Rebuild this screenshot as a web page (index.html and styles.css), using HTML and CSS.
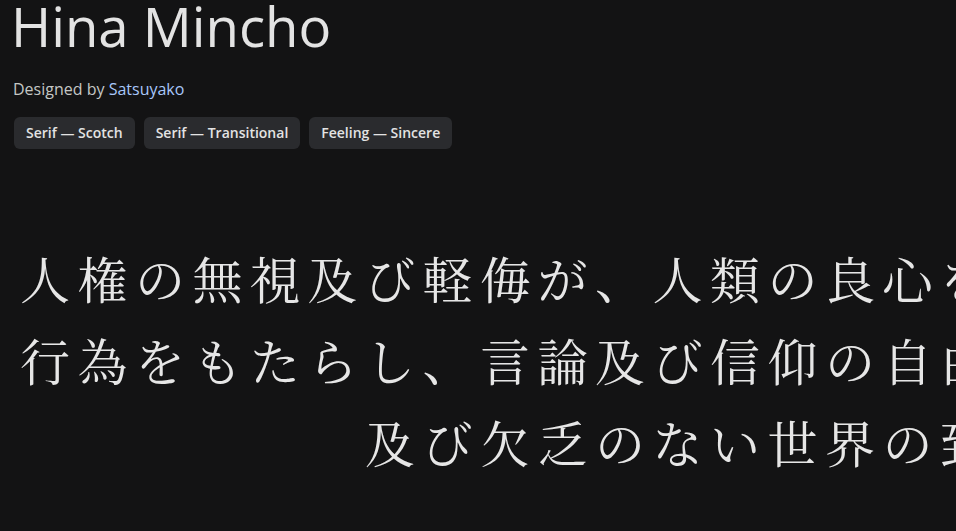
FILE: index.html
```html
<!DOCTYPE html>
<html lang="ja">
<head>
<meta charset="utf-8">
<title>Hina Mincho</title>
<link rel="stylesheet" href="styles.css">
</head>
<body>
<header class="header">
  <h1 class="title">Hina Mincho</h1>
  <p class="meta">Designed by <a class="designer" href="#">Satsuyako</a></p>
  <ul class="tags">
    <li class="tag">Serif — Scotch</li>
    <li class="tag">Serif — Transitional</li>
    <li class="tag">Feeling — Sincere</li>
  </ul>
</header>
<section class="sample" lang="ja">
  <div class="line">人権の無視及び軽侮が、人類の良心を踏みにじった野蛮</div>
  <div class="line">行為をもたらし、言論及び信仰の自由が受けられ、恐怖</div>
  <div class="line">及び欠乏のない世界の到来が</div>
</section>
</body>
</html>
```
FILE: styles.css
```css
html, body {
  margin: 0;
  padding: 0;
}
body {
  background: #131314;
  color: #e3e3e3;
  font-family: "Open Sans", "Liberation Sans", sans-serif;
  overflow: hidden;
  width: 956px;
  height: 531px;
}
.header {
  padding: 0 14px;
}
.title {
  margin: 0 0 0 -3px;
  font-size: 54.5px;
  line-height: 53px;
  font-weight: 400;
  color: #e3e3e3;
}
.meta {
  margin: 26px 0 0 -1px;
  font-size: 16px;
  line-height: 20px;
  color: #c4c7c5;
}
.designer {
  color: #a8c7fa;
  text-decoration: none;
}
.tags {
  display: flex;
  gap: 9px;
  margin: 18px 0 0;
  padding: 0;
  list-style: none;
}
.tag {
  height: 32px;
  padding: 0 12px;
  border-radius: 6px;
  background: #2a2b2e;
  color: #e3e3e3;
  font-size: 14px;
  font-weight: 600;
  line-height: 32px;
  white-space: nowrap;
}
.sample {
  margin-top: 87px;
  margin-left: 20px;
  width: 1437.5px;
  font-family: "Noto Serif CJK JP", "Noto Sans CJK JP", serif;
  font-size: 50px;
  line-height: 82px;
  font-weight: 400;
  letter-spacing: 7.5px;
  color: #e6e6e6;
  text-align: center;
  white-space: nowrap;
}
```
